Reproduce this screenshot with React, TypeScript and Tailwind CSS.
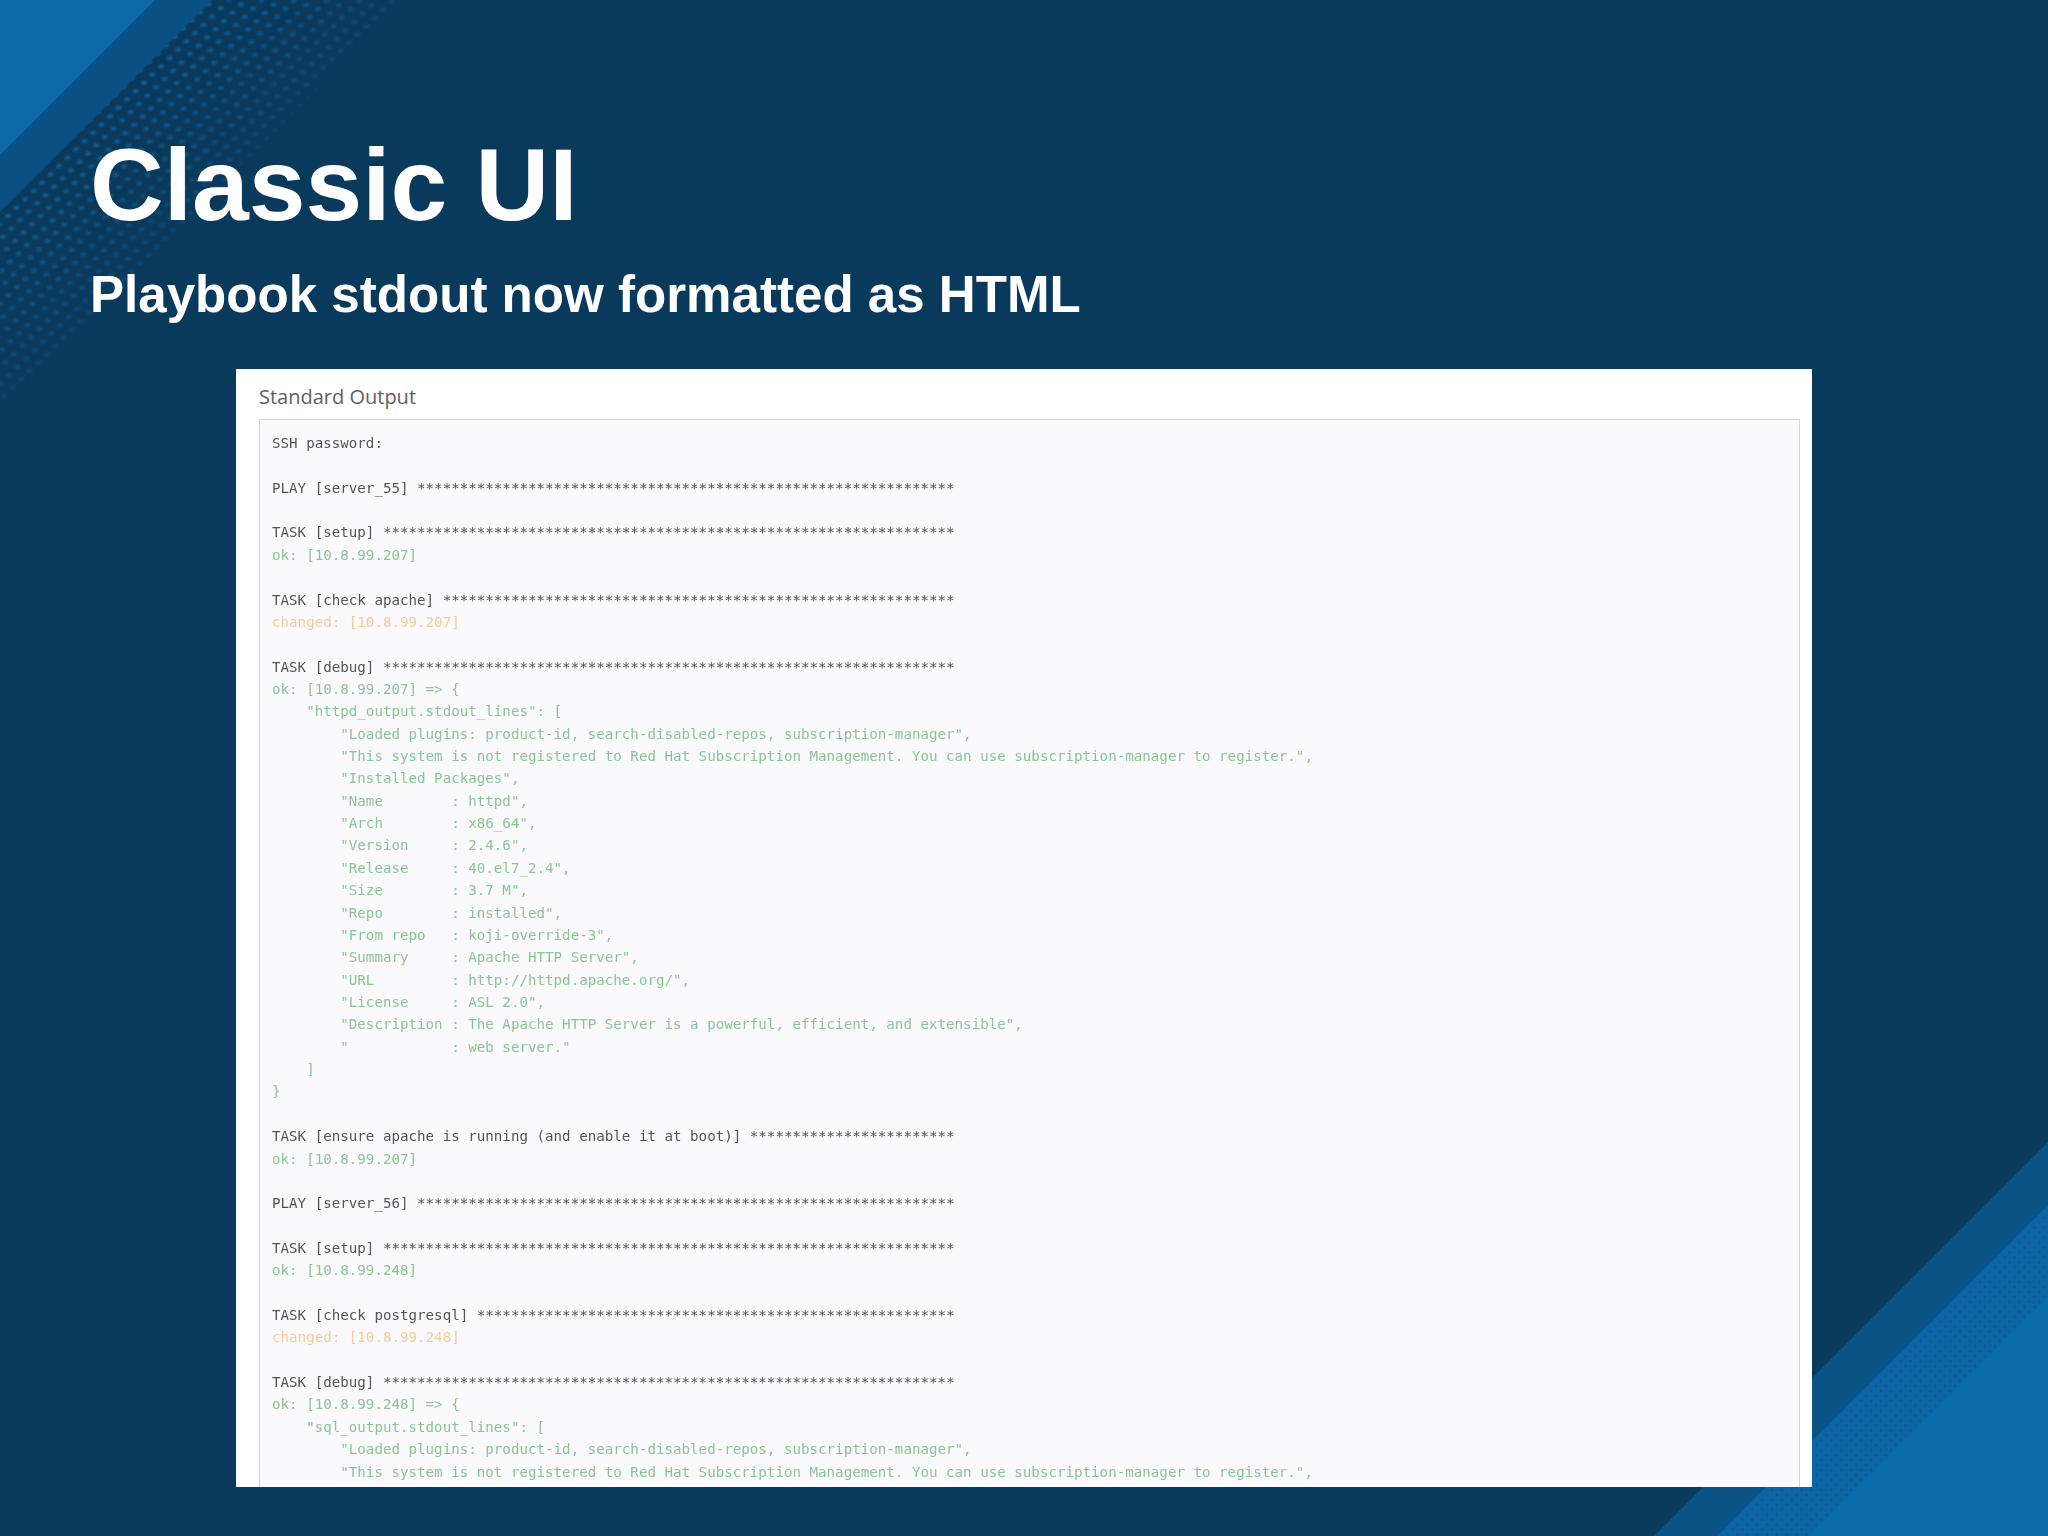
const stars = (n: number) => '*'.repeat(n);

type Tone = 'plain' | 'ok' | 'changed';

const lines: [Tone, string][] = [
  ['plain', 'SSH password:'],
  ['plain', ''],
  ['plain', 'PLAY [server_55] ' + stars(63)],
  ['plain', ''],
  ['plain', 'TASK [setup] ' + stars(67)],
  ['ok', 'ok: [10.8.99.207]'],
  ['plain', ''],
  ['plain', 'TASK [check apache] ' + stars(60)],
  ['changed', 'changed: [10.8.99.207]'],
  ['plain', ''],
  ['plain', 'TASK [debug] ' + stars(67)],
  ['ok', 'ok: [10.8.99.207] => {'],
  ['ok', '    "httpd_output.stdout_lines": ['],
  ['ok', '        "Loaded plugins: product-id, search-disabled-repos, subscription-manager",'],
  ['ok', '        "This system is not registered to Red Hat Subscription Management. You can use subscription-manager to register.",'],
  ['ok', '        "Installed Packages",'],
  ['ok', '        "Name        : httpd",'],
  ['ok', '        "Arch        : x86_64",'],
  ['ok', '        "Version     : 2.4.6",'],
  ['ok', '        "Release     : 40.el7_2.4",'],
  ['ok', '        "Size        : 3.7 M",'],
  ['ok', '        "Repo        : installed",'],
  ['ok', '        "From repo   : koji-override-3",'],
  ['ok', '        "Summary     : Apache HTTP Server",'],
  ['ok', '        "URL         : http://httpd.apache.org/",'],
  ['ok', '        "License     : ASL 2.0",'],
  ['ok', '        "Description : The Apache HTTP Server is a powerful, efficient, and extensible",'],
  ['ok', '        "            : web server."'],
  ['ok', '    ]'],
  ['ok', '}'],
  ['plain', ''],
  ['plain', 'TASK [ensure apache is running (and enable it at boot)] ' + stars(24)],
  ['ok', 'ok: [10.8.99.207]'],
  ['plain', ''],
  ['plain', 'PLAY [server_56] ' + stars(63)],
  ['plain', ''],
  ['plain', 'TASK [setup] ' + stars(67)],
  ['ok', 'ok: [10.8.99.248]'],
  ['plain', ''],
  ['plain', 'TASK [check postgresql] ' + stars(56)],
  ['changed', 'changed: [10.8.99.248]'],
  ['plain', ''],
  ['plain', 'TASK [debug] ' + stars(67)],
  ['ok', 'ok: [10.8.99.248] => {'],
  ['ok', '    "sql_output.stdout_lines": ['],
  ['ok', '        "Loaded plugins: product-id, search-disabled-repos, subscription-manager",'],
  ['ok', '        "This system is not registered to Red Hat Subscription Management. You can use subscription-manager to register.",'],
];

const toneClass: Record<Tone, string> = {
  plain: 'text-[#555555]',
  ok: 'text-[#8cc496]',
  changed: 'text-[#f2cc98]',
};

function Backdrop() {
  return (
    <svg className="absolute inset-0" width="2048" height="1536" viewBox="0 0 2048 1536">
      <defs>
        <pattern
          id="dotsTop"
          width="1"
          height="1"
          patternUnits="userSpaceOnUse"
          patternTransform="matrix(12 4.3 -8.5 8.3 57.25 159.7)"
        >
          <circle cx="0.5" cy="0.5" r="0.2" fill="#17659c" />
        </pattern>
        <linearGradient id="dotsFade" gradientUnits="userSpaceOnUse" x1="106" y1="106" x2="203" y2="203">
          <stop offset="0" stopColor="#093a5c" stopOpacity="0" />
          <stop offset="1" stopColor="#093a5c" stopOpacity="0.65" />
        </linearGradient>
        <pattern id="dotsBottom" width="7" height="7" patternUnits="userSpaceOnUse" patternTransform="rotate(45)">
          <circle cx="3.5" cy="3.5" r="1.6" fill="#0a5a94" />
        </pattern>
      </defs>
      {/* top left corner */}
      <polygon points="0,0 405,0 0,405" fill="url(#dotsTop)" className="blur-[0.8px]" />
      <polygon points="0,0 405,0 0,405" fill="url(#dotsFade)" />
      <polygon points="0,0 212,0 0,212" fill="#0a5082" />
      <polygon points="0,0 155,0 0,155" fill="#0d69a9" />
      {/* bottom right corner */}
      <polygon points="2048,1142 2048,1536 1654,1536" fill="#0a5485" />
      <polygon points="2048,1205 2048,1536 1717,1536" fill="#0c66a6" />
      <polygon points="2048,1205 2048,1536 1717,1536" fill="url(#dotsBottom)" />
      <polygon points="2048,1297 2048,1536 1809,1536" fill="#0c69aa" />
    </svg>
  );
}

export default function App() {
  return (
    <div className="relative w-[2048px] h-[1536px] overflow-hidden bg-[#093a5c]">
      <Backdrop />
      <div className="relative flex flex-col pt-[129px] font-['Liberation_Sans',Arial,sans-serif]">
        <h1 className="pl-[90px] text-[102px] leading-[112px] font-bold text-white">Classic UI</h1>
        <h2 className="pl-[90px] mt-[24px] text-[51.1px] leading-[60px] font-bold text-white">
          Playbook stdout now formatted as HTML
        </h2>
        <section className="ml-[236px] mt-[44px] w-[1576px] h-[1118px] overflow-hidden bg-white pl-[23px] pr-[12px]">
          <div className="h-[50px] pt-[14px] text-[20px] leading-[28px] text-[#606060] font-['Open_Sans',sans-serif]">
            Standard Output
          </div>
          <pre className="h-[1068px] overflow-hidden border border-b-0 border-[#d5d5d8] bg-[#fafafc] pl-[12px] pr-[11px] pt-[12px] text-[14.18px] leading-[22.37px] font-['DejaVu_Sans_Mono',monospace] blur-[0.6px]">
            {lines.map(([tone, text], i) => (
              <div key={i} className={`h-[22.37px] ${toneClass[tone]}`}>
                {text}
              </div>
            ))}
          </pre>
        </section>
      </div>
    </div>
  );
}
